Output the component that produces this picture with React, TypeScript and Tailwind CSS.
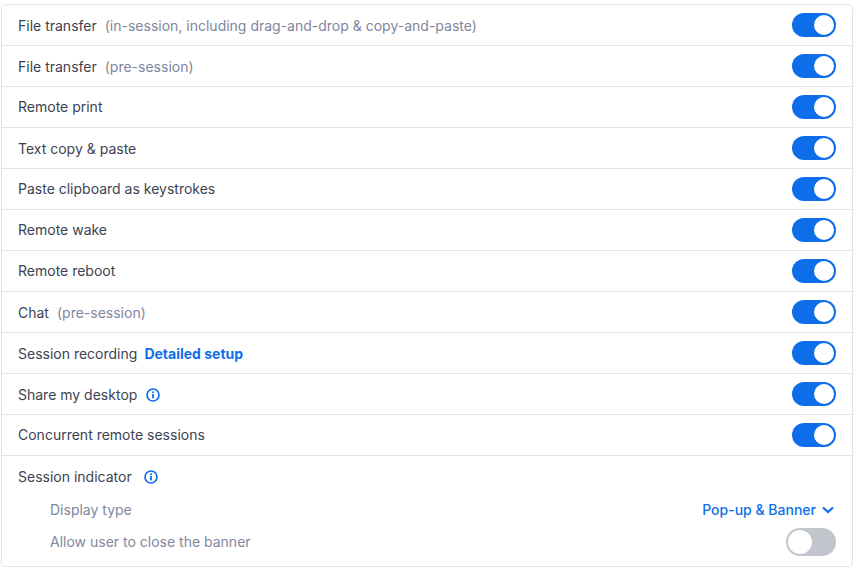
import React from 'react';

const Toggle = () => (
  <div className="flex h-[24px] w-[44px] items-center justify-end rounded-full bg-[#0e6eea] p-[2px]">
    <div className="h-[20px] w-[20px] rounded-full bg-white" />
  </div>
);

const InfoIcon = () => (
  <svg width="14" height="14" viewBox="0 0 14 14" fill="none" className="block">
    <circle cx="7" cy="7" r="6" stroke="#0e6eea" strokeWidth="1.7" />
    <rect x="6.1" y="6" width="1.8" height="4.4" fill="#0e6eea" />
    <rect x="6.1" y="3.4" width="1.8" height="1.7" fill="#0e6eea" />
  </svg>
);

const Note = ({ children }: { children: React.ReactNode }) => (
  <span className="ml-[8px] text-[#8086a0]">{children}</span>
);

// some labels sit a pixel lower in the original
const Row = ({ low, children }: { low?: boolean; children: React.ReactNode }) => (
  <div className="flex h-[41px] items-center justify-between border-b border-[#e1e5ea] px-[16px]">
    <div className={`flex items-center ${low ? 'pt-[2px]' : ''}`}>{children}</div>
    <Toggle />
  </div>
);

const App: React.FC = () => {
  return (
    <div className="h-[570px] w-[856px] bg-white pl-[1px] pt-[4px] text-[14px] leading-[20px] text-[#3d4353] [font-family:Inter,sans-serif]">
      <div className="w-[852px] rounded-[5px] border border-[#e1e5ea]">
        <Row low>File transfer<Note>(in-session, including drag-and-drop &amp; copy-and-paste)</Note></Row>
        <Row low>File transfer<Note>(pre-session)</Note></Row>
        <Row>Remote print</Row>
        <Row low>Text copy &amp; paste</Row>
        <Row>Paste clipboard as keystrokes</Row>
        <Row>Remote wake</Row>
        <Row>Remote reboot</Row>
        <Row low>Chat<Note>(pre-session)</Note></Row>
        <Row low>
          Session recording
          <span className="ml-[7px] font-bold text-[#0e6eea]">Detailed setup</span>
        </Row>
        <Row low>
          Share my desktop
          <span className="ml-[9px]"><InfoIcon /></span>
        </Row>
        <Row>Concurrent remote sessions</Row>
        <div className="px-[16px] pb-[8px] pt-[11px]">
          <div className="flex h-[20px] items-center">
            Session indicator
            <span className="ml-[12px]"><InfoIcon /></span>
          </div>
          <div className="mt-[7px] flex h-[32px] items-center justify-between pl-[32px] text-[#8086a0]">
            <span>Display type</span>
            <span className="mr-[2px] flex items-center font-medium text-[#0e6eea]">
              Pop-up &amp; Banner
              <svg width="12" height="8" viewBox="0 0 12 8" fill="none" className="ml-[6px]">
                <path d="M1 1.5L6 6L11 1.5" stroke="#0e6eea" strokeWidth="2.2" />
              </svg>
            </span>
          </div>
          <div className="flex h-[32px] items-center justify-between pl-[32px] text-[#8086a0]">
            <span>Allow user to close the banner</span>
            <div className="flex h-[28px] w-[50px] items-center justify-start rounded-full bg-[#c1c6cc] p-[2px]">
              <div className="h-[24px] w-[24px] rounded-full bg-white" />
            </div>
          </div>
        </div>
      </div>
    </div>
  );
};

export default App;
